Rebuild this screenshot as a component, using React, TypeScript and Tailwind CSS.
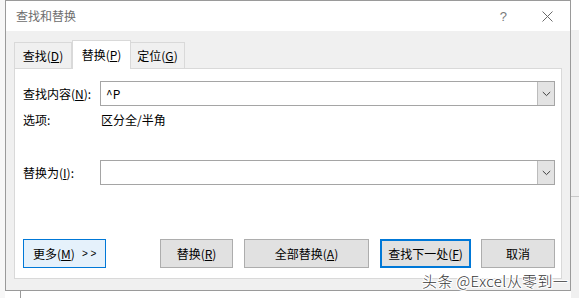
import React from "react";

const font = { fontFamily: '"Noto Sans CJK SC", "Microsoft YaHei", sans-serif' };

function Chevron() {
  return (
    <svg width="9" height="6" viewBox="0 0 9 6" fill="none">
      <path d="M0.8 1 L4.5 4.6 L8.2 1" stroke="#404040" strokeWidth="1" />
    </svg>
  );
}

function Combo({ value }: { value?: string }) {
  return (
    <div className="flex-1 h-[25px] flex border border-[#a5a5a5] bg-white">
      <div className="flex-1 flex items-center pl-[5px] text-[12px] text-black">{value}</div>
      <div className="w-[17px] h-full bg-[#e3e3e3] border-l border-[#bcbcbc] flex items-center justify-center">
        <Chevron />
      </div>
    </div>
  );
}

function Btn({
  children,
  className,
}: {
  children: React.ReactNode;
  className: string;
}) {
  return (
    <div className={"h-[29px] flex items-center text-[12px] text-black " + className}>{children}</div>
  );
}

export default function App() {
  return (
    <div className="relative w-[579px] h-[298px] bg-white overflow-hidden text-[12px] leading-none" style={font}>
      <div className="flex h-full">
        {/* left background strip */}
        <div className="w-[5px] h-full bg-[#f7f7f7]" />
        {/* dialog */}
        <div className="w-[566px] h-[291px] flex flex-col border border-[#9a9a9a] bg-[#f0f0f0]">
          <div className="h-[30px] bg-white flex items-center pl-[10px] pr-[10px] shrink-0">
            <span className="text-[12px] text-[#6d6d6d]">查找和替换</span>
            <div className="flex-1" />
            <span className="text-[13px] text-[#7a7a7a] mr-[35px]" style={{ fontFamily: '"Liberation Sans", sans-serif' }}>?</span>
            <svg width="11" height="11" viewBox="0 0 11 11" className="mr-[7px]">
              <path d="M0.5 0.5 L10.5 10.5 M10.5 0.5 L0.5 10.5" stroke="#6a6a6a" strokeWidth="1" />
            </svg>
          </div>
          <div className="flex-1 flex flex-col px-[8px] pt-[9px]">
            {/* tabs */}
            <div className="flex items-end h-[28px] relative z-10">
              <div className="w-[58px] h-[26px] flex items-center justify-center border border-b-0 border-[#d9d9d9] bg-[#f0f0f0]">
                <span>查找(<u>D</u>)</span>
              </div>
              <div className="w-[59px] h-[29px] flex items-center justify-center border border-b-0 border-[#d9d9d9] bg-white -mb-[1px]">
                <span>替换(<u>P</u>)</span>
              </div>
              <div className="w-[54px] h-[26px] flex items-center justify-center border border-b-0 border-l-0 border-[#d9d9d9] bg-[#f0f0f0]">
                <span>定位(<u>G</u>)</span>
              </div>
            </div>
            {/* panel */}
            <div className="h-[211px] border border-[#d9d9d9] bg-white flex flex-col pl-[8px] pr-[6px] pt-[12px]">
              <div className="flex items-center">
                <div className="w-[77px]">查找内容(<u>N</u>):</div>
                <Combo value="^P" />
              </div>
              <div className="flex items-center h-[14px] mt-[7px]">
                <div className="w-[78px]">选项:</div>
                <div>区分全/半角</div>
              </div>
              <div className="flex items-center mt-[33px]">
                <div className="w-[77px]">替换为(<u>I</u>):</div>
                <Combo />
              </div>
              <div className="flex mt-[54px]">
                <Btn className="w-[83px] bg-[#e5f1fb] border border-[#0078d7] pl-[9px]">
                  <span>更多(<u>M</u>)</span>
                  <span className="ml-[7px] text-[10px]" style={{ fontFamily: '"Liberation Sans", sans-serif' }}>&gt; &gt;</span>
                </Btn>
                <Btn className="w-[73px] ml-[54px] bg-[#e1e1e1] border border-[#adadad] justify-center">
                  <span>替换(<u>R</u>)</span>
                </Btn>
                <Btn className="w-[125px] ml-[11px] bg-[#e1e1e1] border border-[#adadad] justify-center">
                  <span>全部替换(<u>A</u>)</span>
                </Btn>
                <Btn className="w-[91px] ml-[11px] bg-[#e1e1e1] border-2 border-[#0078d7] justify-center">
                  <span>查找下一处(<u>F</u>)</span>
                </Btn>
                <Btn className="w-[74px] ml-[10px] bg-[#e1e1e1] border border-[#adadad] justify-center">
                  <span>取消</span>
                </Btn>
              </div>
            </div>
          </div>
        </div>
        {/* right background strip */}
        <div className="flex-1 h-full bg-[#f0f0f0] flex flex-col">
          <div className="h-[30px] bg-white" />
          <div className="h-[167px] border-b border-[#c8c8c8]" />
        </div>
      </div>
      {/* bottom background lines */}
      <div className="absolute left-[20px] top-[291px] w-[1px] h-[7px] bg-[#9a9a9a]" />
      {/* watermark */}
      <div
        className="absolute left-[422px] top-[271px] text-[15px] tracking-[0.4px] text-[#3a3a3a] leading-[20px] whitespace-nowrap"
        style={{
          fontFamily: '"Noto Sans CJK SC", sans-serif',
          fontWeight: 300,
          textShadow:
            "1px 0 0 #fff, -1px 0 0 #fff, 0 1px 0 #fff, 0 -1px 0 #fff, 1px 1px 0 #fff, -1px -1px 0 #fff, 1px -1px 0 #fff, -1px 1px 0 #fff",
        }}
      >
        头条 @Excel从零到一
      </div>
    </div>
  );
}
